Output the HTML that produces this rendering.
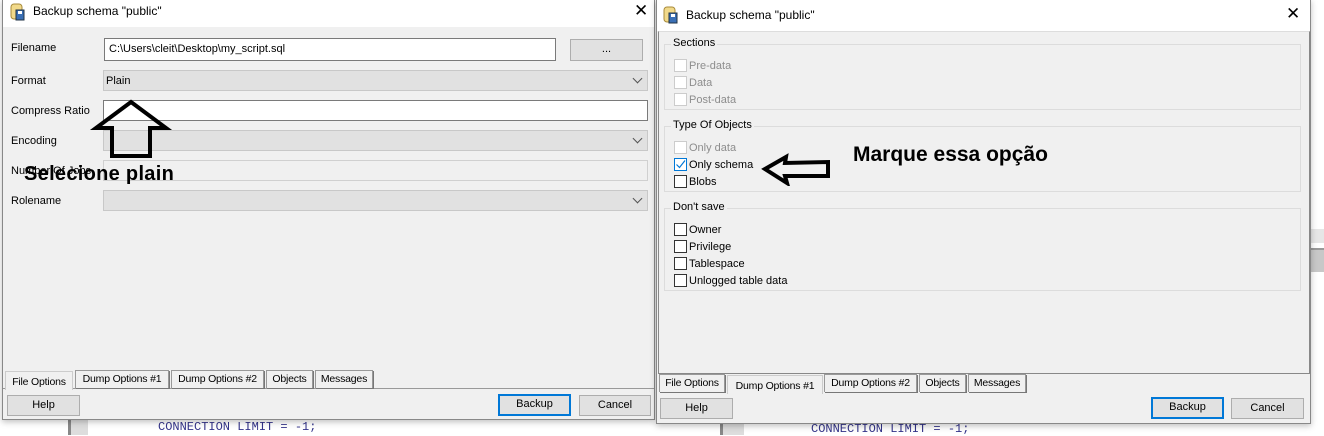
<!DOCTYPE html>
<html><head><meta charset="utf-8"><style>
*{box-sizing:border-box;margin:0;padding:0}
body{width:1324px;height:435px;background:#fff;position:relative;overflow:hidden;font-family:"Liberation Sans",sans-serif;font-size:11px;color:#000}
.a{position:absolute}
.dlg{background:#f0f0f0;border:1px solid #888;box-shadow:0 2px 6px rgba(0,0,0,.25)}
.title{background:#fff;font-size:12px}
.in{background:#fff;border:1px solid #7a7a7a}
.cb{background:#e1e1e1;border:1px solid #c8c8c8}
.dis{background:#f0f0f0;border:1px solid #d0d0d0}
.btn{background:#e1e1e1;border:1px solid #adadad;text-align:center;line-height:19px}
.btnd{background:#e1e1e1;border:2px solid #0078d7;text-align:center;line-height:17px}
.tab{border:1px solid #999;border-bottom:none;background:#f0f0f0;padding:0 2px;line-height:16px;box-shadow:1px 1px 0 #777;white-space:nowrap;overflow:hidden;font-size:10.5px;letter-spacing:-0.2px;text-align:center}
.chev{position:absolute;right:6px;top:4px;width:7px;height:7px;border-right:1px solid #555;border-bottom:1px solid #555;transform:rotate(45deg)}
.gb{border:1px solid #dcdcdc}
.gl{position:absolute;top:-8px;left:6px;background:#f0f0f0;padding:0 2px}
.ck{position:absolute;width:13px;height:13px;border:1px solid #333;background:#fff}
.ckd{border-color:#ccc}
.lbl{position:absolute;white-space:nowrap}
.grey{color:#8d8d8d}
.big{font-weight:bold;font-size:20px;white-space:nowrap}
</style></head><body>
<div class="a" style="left:68px;top:420px;width:20px;height:15px;background:#ddd;border-left:3px solid #888"></div>
<div class="a" style="left:158px;top:420px;font-family:'Liberation Mono',monospace;font-size:12px;color:#33338a">CONNECTION LIMIT = -1;</div>
<div class="a" style="left:720px;top:422px;width:24px;height:13px;background:#ddd;border-left:3px solid #888"></div>
<div class="a" style="left:811px;top:422px;font-family:'Liberation Mono',monospace;font-size:12px;color:#33338a">CONNECTION LIMIT = -1;</div>
<div class="a" style="left:1310px;top:229px;width:14px;height:14px;background:#e6e6e6"></div>
<div class="a" style="left:1310px;top:248px;width:14px;height:24px;background:#c8c8c8;border-top:2px solid #999"></div>

<!-- LEFT DIALOG -->
<div class="a dlg" style="left:2px;top:-1px;width:653px;height:421px"></div>
<div class="a title" style="left:3px;top:0;width:651px;height:27px"></div>
<svg class="a" style="left:10px;top:3px" width="16" height="18" viewBox="0 0 16 18"><rect x="1" y="1" width="11" height="15" rx="3" fill="#f1d98a" stroke="#a88a3a"/><rect x="6" y="7" width="8" height="10" fill="#3a6fb5" stroke="#234"/><rect x="8" y="8" width="4" height="3" fill="#fff"/></svg>
<div class="a" style="left:33px;top:4px;font-size:12px">Backup schema "public"</div>
<div class="a" style="left:634px;top:1px;font-size:17px;font-weight:300">✕</div>

<div class="lbl" style="left:11px;top:42px">Filename</div>
<div class="a in" style="left:104px;top:38px;width:452px;height:23px"><span style="position:absolute;left:4px;top:4px">C:\Users\cleit\Desktop\my_script.sql</span></div>
<div class="a btn" style="left:570px;top:39px;width:73px;height:22px">...</div>
<div class="lbl" style="left:11px;top:75px">Format</div>
<div class="a cb" style="left:103px;top:70px;width:545px;height:21px"><span style="position:absolute;left:2px;top:4px">Plain</span><i class="chev"></i></div>
<div class="lbl" style="left:11px;top:105px">Compress Ratio</div>
<div class="a in" style="left:103px;top:100px;width:545px;height:21px"></div>
<div class="lbl" style="left:11px;top:135px">Encoding</div>
<div class="a cb" style="left:103px;top:130px;width:545px;height:21px"><i class="chev"></i></div>
<div class="lbl" style="left:11px;top:165px">Number Of Jobs</div>
<div class="a dis" style="left:103px;top:160px;width:545px;height:21px"></div>
<div class="lbl" style="left:11px;top:195px">Rolename</div>
<div class="a cb" style="left:103px;top:190px;width:545px;height:21px"><i class="chev"></i></div>
<svg class="a" style="left:0;top:0" width="200" height="200"><path d="M131 102 L166 128 L150 128 L150 156 L112 156 L112 128 L96 128 Z" fill="none" stroke="#000" stroke-width="4"/></svg>
<div class="a big" style="left:24px;top:163px;letter-spacing:0.3px">Selecione plain</div>

<div class="a" style="left:3px;top:388px;width:651px;border-top:1px solid #999"></div>
<div class="a tab" style="left:5px;top:371px;width:68px;height:19px;box-shadow:none;border-color:#ccc;line-height:20px">File Options</div>
<div class="a tab" style="left:75px;top:370px;width:94px;height:18px">Dump Options #1</div>
<div class="a tab" style="left:171px;top:370px;width:93px;height:18px">Dump Options #2</div>
<div class="a tab" style="left:266px;top:370px;width:47px;height:18px">Objects</div>
<div class="a tab" style="left:315px;top:370px;width:58px;height:18px">Messages</div>
<div class="a btn" style="left:7px;top:395px;width:73px;height:21px">Help</div>
<div class="a btnd" style="left:498px;top:394px;width:73px;height:22px">Backup</div>
<div class="a btn" style="left:579px;top:395px;width:72px;height:21px">Cancel</div>

<!-- RIGHT DIALOG -->
<div class="a dlg" style="left:656px;top:-1px;width:655px;height:425px"></div>
<div class="a title" style="left:657px;top:0;width:653px;height:31px"></div>
<svg class="a" style="left:663px;top:6px" width="16" height="18" viewBox="0 0 16 18"><rect x="1" y="1" width="11" height="15" rx="3" fill="#f1d98a" stroke="#a88a3a"/><rect x="6" y="7" width="8" height="10" fill="#3a6fb5" stroke="#234"/><rect x="8" y="8" width="4" height="3" fill="#fff"/></svg>
<div class="a" style="left:686px;top:8px;font-size:12px">Backup schema "public"</div>
<div class="a" style="left:1286px;top:4px;font-size:17px">✕</div>
<div class="a" style="left:658px;top:31px;width:652px;height:343px;border:1px solid #888;border-top:1px solid #ddd"></div>

<div class="a gb" style="left:664px;top:44px;width:637px;height:66px"><span class="gl">Sections</span></div>
<div class="ck ckd" style="left:674px;top:59px"></div><div class="lbl grey" style="left:689px;top:60px">Pre-data</div>
<div class="ck ckd" style="left:674px;top:76px"></div><div class="lbl grey" style="left:689px;top:77px">Data</div>
<div class="ck ckd" style="left:674px;top:93px"></div><div class="lbl grey" style="left:689px;top:94px">Post-data</div>

<div class="a gb" style="left:664px;top:126px;width:637px;height:66px"><span class="gl">Type Of Objects</span></div>
<div class="ck ckd" style="left:674px;top:141px"></div><div class="lbl grey" style="left:689px;top:142px">Only data</div>
<div class="ck" style="left:674px;top:158px;border-color:#0078d7"><svg width="11" height="11" style="position:absolute;left:0;top:0"><path d="M1.5 5.5 L4.5 8.5 L10 1.5" fill="none" stroke="#0078d7" stroke-width="1.2"/></svg></div><div class="lbl" style="left:689px;top:159px">Only schema</div>
<div class="ck" style="left:674px;top:175px"></div><div class="lbl" style="left:689px;top:176px">Blobs</div>
<svg class="a" style="left:760px;top:152px" width="74" height="34" viewBox="0 0 74 34"><path d="M5 17 L26 5 L25 11 L68 10 L68 24 L25 24 L27 31 Z" fill="none" stroke="#000" stroke-width="4"/></svg>
<div class="a big" style="left:853px;top:143px;font-size:21px">Marque essa opção</div>

<div class="a gb" style="left:664px;top:208px;width:637px;height:83px"><span class="gl">Don't save</span></div>
<div class="ck" style="left:674px;top:223px"></div><div class="lbl" style="left:689px;top:224px">Owner</div>
<div class="ck" style="left:674px;top:240px"></div><div class="lbl" style="left:689px;top:241px">Privilege</div>
<div class="ck" style="left:674px;top:257px"></div><div class="lbl" style="left:689px;top:258px">Tablespace</div>
<div class="ck" style="left:674px;top:274px"></div><div class="lbl" style="left:689px;top:275px">Unlogged table data</div>

<div class="a tab" style="left:659px;top:374px;width:66px;height:18px">File Options</div>
<div class="a tab" style="left:727px;top:375px;width:96px;height:19px;box-shadow:none;border-color:#ccc;line-height:20px">Dump Options #1</div>
<div class="a tab" style="left:824px;top:374px;width:93px;height:18px">Dump Options #2</div>
<div class="a tab" style="left:919px;top:374px;width:47px;height:18px">Objects</div>
<div class="a tab" style="left:968px;top:374px;width:58px;height:18px">Messages</div>
<div class="a btn" style="left:660px;top:398px;width:73px;height:21px">Help</div>
<div class="a btnd" style="left:1151px;top:397px;width:73px;height:22px">Backup</div>
<div class="a btn" style="left:1231px;top:398px;width:73px;height:21px">Cancel</div>
</body></html>
